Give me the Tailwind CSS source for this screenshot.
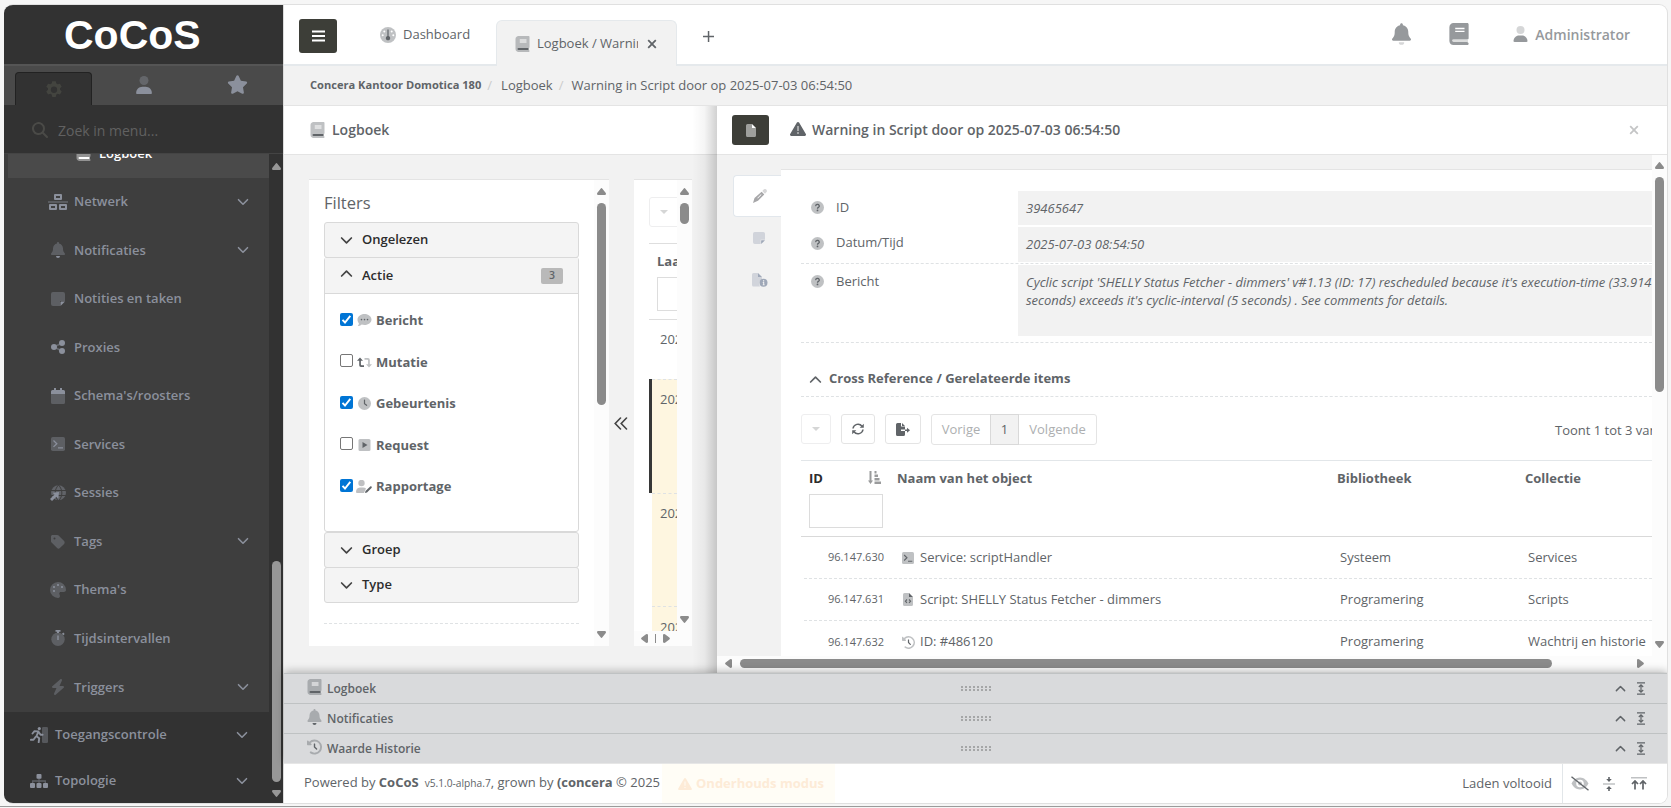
<!DOCTYPE html>
<html lang="nl">
<head>
<meta charset="utf-8">
<title>CoCoS</title>
<script src="https://cdn.jsdelivr.net/npm/@tailwindcss/browser@4"></script>
</head>
<body class="h-[808px] w-[1671px] overflow-hidden bg-[#f6f6f6] font-['Open_Sans','Noto_Sans',sans-serif] text-[13px] text-[#606468]">
<svg class="hidden">
  <symbol id="book" viewBox="0 0 448 512"><path opacity=".4" d="M96 0C43 0 0 43 0 96v320c0 53 43 96 96 96h320c18 0 32-14 32-32s-14-32-32-32v-64c18 0 32-14 32-32V32c0-18-14-32-32-32z"/><path d="M96 384h320v64H96a32 32 0 0 1 0-64z"/><path fill="#fff" d="M136 112h216v32H136zM136 176h216v32H136z"/></symbol>
  <symbol id="book-dark" viewBox="0 0 448 512"><path d="M96 0C43 0 0 43 0 96v320c0 53 43 96 96 96h320c18 0 32-14 32-32s-14-32-32-32v-64c18 0 32-14 32-32V32c0-18-14-32-32-32z"/><path fill="#dcdddd" d="M96 376h336v64H96a32 32 0 0 1 0-64z"/><path fill="#fff" d="M136 112h216v32H136zM136 180h216v32H136z"/></symbol>
  <symbol id="bell" viewBox="0 0 448 512"><path opacity=".4" d="M224 0c-17.700 0-32 14.300-32 32v19.200C119 66 64 130.600 64 208v18.800c0 47-17.300 92.400-48.500 127.600l-7.400 8.300c-8.400 9.400-10.400 22.900-5.300 34.400S19.400 416 32 416h384c12.600 0 24-7.400 29.200-18.900s3.100-25-5.300-34.400l-7.400-8.300C401.300 319.200 384 273.900 384 226.800V208c0-77.400-55-142-128-156.800V32c0-17.700-14.300-32-32-32z"/><path d="M288 448a64 64 0 0 1-128 0z"/></symbol>
  <symbol id="bell-dark" viewBox="0 0 448 512"><path d="M224 0c-17.700 0-32 14.300-32 32v19.200C119 66 64 130.600 64 208v18.800c0 47-17.300 92.400-48.500 127.600l-7.400 8.300c-8.400 9.400-10.400 22.900-5.300 34.400S19.400 416 32 416h384c12.600 0 24-7.400 29.200-18.900s3.100-25-5.300-34.400l-7.400-8.300C401.300 319.200 384 273.900 384 226.800V208c0-77.400-55-142-128-156.800V32c0-17.700-14.300-32-32-32z"/><path opacity=".4" d="M288 448a64 64 0 0 1-128 0z"/></symbol>
  <symbol id="user" viewBox="0 0 448 512"><circle opacity=".4" cx="224" cy="128" r="128"/><path d="M178 304C80 304 0 384 0 482c0 17 13 30 30 30h388c17 0 30-13 30-30 0-98-80-178-178-178z"/></symbol>
  <symbol id="star" viewBox="0 0 576 512"><path d="M316.900 18C311.600 7 300.400 0 288.100 0s-23.400 7-28.800 18L195 150.300 51.400 171.500c-12 1.800-22 10.200-25.700 21.700s-.7 24.200 7.900 32.700L137.800 329l-24.600 145.700c-2 12 3 24.200 12.900 31.300s23 8 33.800 2.300l128.300-68.500 128.300 68.500c10.800 5.700 23.900 4.900 33.800-2.300s14.900-19.300 12.900-31.300L438.500 329l104.200-103.100c8.600-8.500 11.700-21.200 7.900-32.700s-13.700-19.900-25.700-21.700l-143.700-21.200z"/></symbol>
  <symbol id="gear" viewBox="0 0 512 512"><path fill-rule="evenodd" d="M206 14h100l16 66 38 22 65-19 50 86-49 47v40l49 47-50 86-65-19-38 22-16 66H206l-16-66-38-22-65 19-50-86 49-47v-40l-49-47 50-86 65 19 38-22zm50 152a90 90 0 1 0 0 180 90 90 0 0 0 0-180z" transform="translate(0 22)"/></symbol>
  <symbol id="search" viewBox="0 0 512 512"><path d="M416 208c0 45.900-14.900 88.300-40 122.700l126.600 126.700c12.500 12.500 12.500 32.800 0 45.300s-32.800 12.500-45.300 0L330.700 376A208 208 0 1 1 416 208zM208 352a144 144 0 1 0 0-288 144 144 0 0 0 0 288z"/></symbol>
  <symbol id="down" viewBox="0 0 12 12"><path fill="none" stroke="currentColor" stroke-width="1.600" stroke-linecap="round" stroke-linejoin="round" d="M1.500 3.700 6 8.200l4.500-4.500"/></symbol>
  <symbol id="up" viewBox="0 0 12 12"><path fill="none" stroke="currentColor" stroke-width="1.600" stroke-linecap="round" stroke-linejoin="round" d="M1.500 8.300 6 3.800l4.500 4.500"/></symbol>
  <symbol id="network" viewBox="0 0 20 16"><path opacity=".5" d="M0 7.300h20v1.500H0z"/><path fill-rule="evenodd" d="M7 0h6a1 1 0 0 1 1 1v4a1 1 0 0 1-1 1H7a1 1 0 0 1-1-1V1a1 1 0 0 1 1-1zm1 2v2h4V2zM2 10h6a1 1 0 0 1 1 1v4a1 1 0 0 1-1 1H2a1 1 0 0 1-1-1v-4a1 1 0 0 1 1-1zm1 2v2h4v-2zM12 10h6a1 1 0 0 1 1 1v4a1 1 0 0 1-1 1h-6a1 1 0 0 1-1-1v-4a1 1 0 0 1 1-1zm1 2v2h4v-2z"/></symbol>
  <symbol id="note" viewBox="0 0 14 14"><path opacity=".4" d="M2 0h10a2 2 0 0 1 2 2v7H9v5H2a2 2 0 0 1-2-2V2a2 2 0 0 1 2-2z"/><path d="M9.500 14V10a.5.5 0 0 1 .5-.5h4z"/></symbol>
  <symbol id="nodes" viewBox="0 0 14 14"><path opacity=".5" stroke="currentColor" stroke-width="1.800" d="M3 7 11 3M3 7l8 4"/><circle cx="3" cy="7" r="3"/><circle cx="11" cy="3" r="3"/><circle cx="11" cy="11" r="3"/></symbol>
  <symbol id="calendar" viewBox="0 0 14 16"><path opacity=".4" d="M0 6h14v8.500a1.500 1.500 0 0 1-1.500 1.500h-11A1.500 1.500 0 0 1 0 14.500z"/><path d="M3 0h2v2h4V0h2v2h1.500A1.500 1.500 0 0 1 14 3.500V6H0V3.500A1.500 1.500 0 0 1 1.500 2H3z"/></symbol>
  <symbol id="terminal" viewBox="0 0 14 14"><rect opacity=".4" width="14" height="14" rx="1.800"/><path fill="none" stroke="currentColor" stroke-width="1.300" d="m2.500 3.500 3.300 3.200-3.300 3.200M7 10.800h5"/></symbol>
  <symbol id="globe" viewBox="0 0 16 16"><g opacity=".45"><circle cx="8.500" cy="7.800" r="7.500"/></g><path stroke="#3e3e3e" fill="none" d="M1 5.500h15M1 10.500h15M8.500 0c-4.500 5-4.500 11 0 16M8.500 0c4.500 5 4.500 11 0 16"/><path d="M0 14 4.500 9.500 2.500 7.700 9 7l-.7 6.700-2-2L2 16z"/></symbol>
  <symbol id="tag" viewBox="0 0 448 480"><path opacity=".4" fill-rule="evenodd" d="M0 80v149.500c0 17 6.700 33.300 18.700 45.300l176 176c25 25 65.500 25 90.500 0l133.500-133.500c25-25 25-65.500 0-90.500l-176-176c-12-12-28.300-18.700-45.300-18.700H48C21.500 32 0 53.500 0 80zm112 32a32 32 0 1 1 0 64 32 32 0 0 1 0-64z"/></symbol>
  <symbol id="palette" viewBox="0 0 512 512"><path opacity=".4" d="M512 256v2.700c-.4 36.500-33.600 61.300-70.100 61.300H344c-26.500 0-48 21.500-48 48 0 3.400.4 6.700 1 9.900 2.100 10.200 6.500 20 10.800 29.900 6.100 13.800 12.100 27.500 12.100 42 0 31.800-21.600 60.700-53.400 62A256 256 0 1 1 512 256z"/><circle cx="128" cy="288" r="32"/><circle cx="128" cy="160" r="32"/><circle cx="256" cy="96" r="32"/><circle cx="384" cy="160" r="32"/></symbol>
  <symbol id="stopwatch" viewBox="0 0 14 16"><circle opacity=".4" cx="7" cy="9.300" r="6.700"/><path d="M4.500 0h5v1.800H8V3H6V1.800H4.500zM6.300 5.500h1.400V10H6.300zM11 3.800l1.300-1.200 1.400 1.400-1.300 1.300z"/></symbol>
  <symbol id="bolt" viewBox="0 0 448 512"><path opacity=".4" d="M349.400 44.600c5.900-13.700 1.500-29.700-10.600-38.500s-28.600-8-39.900 1.800l-256 224c-10 8.800-13.600 22.900-8.900 35.300S50.700 288 64 288h111.500L98.600 467.400c-5.900 13.700-1.500 29.700 10.600 38.500s28.600 8 39.900-1.800l256-224c10-8.800 13.600-22.900 8.900-35.300s-16.600-20.700-30-20.700H272.500z"/></symbol>
  <symbol id="run" viewBox="0 0 18 16"><rect opacity=".4" x="12" width="6" height="16" rx="1.300"/><circle cx="9.300" cy="1.600" r="1.600"/><path fill="none" stroke="currentColor" stroke-width="1.900" stroke-linecap="round" stroke-linejoin="round" d="m2.500 6.500 2-2.300 4 .2-2 4.800 2.700 2 -.5 4M0.900 12.800h2.600L5.500 10M9 5.500l1.600 2.300h2"/></symbol>
  <symbol id="sitemap" viewBox="0 0 18 14"><path opacity=".5" fill="none" stroke="currentColor" stroke-width="1.300" d="M2.700 10V7h12.600v3M9 4v6"/><rect x="6.500" width="5" height="4.800" rx="1"/><rect y="9" width="5" height="5" rx="1"/><rect x="6.500" y="9" width="5" height="5" rx="1"/><rect x="13" y="9" width="5" height="5" rx="1"/></symbol>
  <symbol id="gauge" viewBox="0 0 16 16"><circle opacity=".4" cx="8" cy="8" r="8"/><g fill="#fff"><circle cx="4.300" cy="4.500" r="1"/><circle cx="11.700" cy="4.500" r="1"/><circle cx="2.700" cy="8.300" r="1"/><circle cx="13.300" cy="8.300" r="1"/></g><path d="M7.400 2.500h1.200V9a2.200 2.200 0 1 1-1.200 0z"/></symbol>
  <symbol id="warn" viewBox="0 32 512 448"><path fill-rule="evenodd" d="M256 32c14.200 0 27.300 7.500 34.500 19.800l216 368c7.300 12.400 7.300 27.700.2 40.100S486.300 480 472 480H40c-14.300 0-27.600-7.700-34.700-20.100s-7-27.800.2-40.100l216-368C228.700 39.500 241.800 32 256 32z"/><path fill="#fff" opacity=".6" d="M232 160h48v160h-48z"/><circle fill="#fff" opacity=".6" cx="256" cy="384" r="30"/></symbol>
  <symbol id="history" viewBox="0 0 512 512"><path opacity=".4" d="M75 75 41 41C25.900 25.900 0 36.600 0 57.900V168c0 13.300 10.700 24 24 24h110.100c21.400 0 32.100-25.900 17-41l-30.800-30.800A192 192 0 1 1 146.300 413.600c-14.500-10.100-34.400-6.600-44.600 7.900s-6.600 34.400 7.900 44.600A256 256 0 1 0 75 75z"/><path d="M256 128c-13.300 0-24 10.700-24 24v104c0 6.400 2.500 12.500 7 17l72 72c9.400 9.400 24.600 9.400 33.900 0s9.400-24.600 0-33.900l-65-65V152c0-13.300-10.700-24-24-24z"/></symbol>
  <symbol id="file" viewBox="0 0 10 13"><path opacity=".5" d="M1.500 0H6v4h4v7.500A1.500 1.500 0 0 1 8.500 13h-7A1.500 1.500 0 0 1 0 11.500v-10A1.500 1.500 0 0 1 1.500 0z"/><path d="M6 0l4 4H6z"/></symbol>
  <symbol id="pencil" viewBox="0 0 14 14"><path opacity=".45" d="M9.300 2 10.700.6a1.800 1.800 0 0 1 2.600 2.600L12 4.700z"/><path fill-rule="evenodd" d="M8.600 2.700 11.300 5.400 5 11.800 0 14l1.500-5zM8 5.300 4.300 9l.5.500 3.700-3.700z"/></symbol>
  <symbol id="fileinfo" viewBox="0 0 16 14"><path opacity=".4" d="M1.500 0H6v4h4v2a5 5 0 0 0-2 7.500H1.500A1.500 1.500 0 0 1 0 12V1.500A1.500 1.500 0 0 1 1.500 0z"/><path d="M6 0l4 4H6z"/><circle cx="11.500" cy="9.800" r="4"/><path fill="#f2f2f2" d="M11 7.300h1.200v1.100H11zM10.700 9h1.500v2.600h.5v.7h-2v-.7h.5V9.700h-.5z"/></symbol>
  <symbol id="help" viewBox="0 0 13 13"><circle opacity=".4" cx="6.500" cy="6.500" r="6.500"/><path fill="none" stroke="currentColor" stroke-width="1.300" d="M4.700 5.100a1.800 1.600 0 1 1 2.700 1.300q-.9.500-.9 1.300"/><circle cx="6.500" cy="9.400" r=".9"/></symbol>
  <symbol id="comment" viewBox="0 0 14 13"><path opacity=".4" d="M7 0c3.900 0 7 2.500 7 5.500S10.900 11 7 11c-1 0-2-.2-2.800-.5C3 11.500 1.500 12 .3 12c.7-.9 1.100-1.700 1.100-2.800C.5 8.200 0 7 0 5.500 0 2.500 3.100 0 7 0z"/><circle cx="4" cy="5.600" r=".8"/><circle cx="7" cy="5.600" r=".8"/><circle cx="10" cy="5.600" r=".8"/></symbol>
  <symbol id="retweet" viewBox="0 0 15 11"><path d="M0 3.800 3 .5l3 3.300H3.900v3.700a.7.700 0 0 0 .7.700H7V10H4a1.800 1.800 0 0 1-1.800-1.800V3.800z"/><path opacity=".4" d="M15 7.200 12 10.500 9 7.200h2.100V3.500a.7.700 0 0 0-.7-.7H7.500V1H11a1.800 1.800 0 0 1 1.800 1.800v4.400z"/></symbol>
  <symbol id="clock" viewBox="0 0 13 13"><circle opacity=".4" cx="6.500" cy="6.500" r="6.500"/><path fill="none" stroke="currentColor" stroke-width="1.200" stroke-linecap="round" d="M6.500 3v3.700L8.600 8.300"/></symbol>
  <symbol id="play" viewBox="0 0 12 12"><rect opacity=".4" width="12" height="12" rx="1.500"/><path d="M4 3l5 3-5 3z"/></symbol>
  <symbol id="useredit" viewBox="0 0 16 13"><g opacity=".4"><circle cx="5.500" cy="3" r="3.200"/><path d="M4 7.500h3q2 0 3 1L8 13H1a1 1 0 0 1-1-1 4.500 4.500 0 0 1 4-4.500z"/></g><path d="M9 13l.5-2 4.700-4.600q.6-.5 1.300.1t0 1.400L11 12.500z"/></symbol>
  <symbol id="filecode" viewBox="0 0 10 13"><path opacity=".4" d="M1.500 0H6v4h4v7.500A1.500 1.500 0 0 1 8.500 13h-7A1.500 1.500 0 0 1 0 11.500v-10A1.500 1.500 0 0 1 1.500 0z"/><path d="M6 0l4 4H6z"/><path fill="none" stroke="currentColor" stroke-width="1.100" d="M4 6.500 2.400 8.200 4 9.900M6 6.500l1.600 1.700L6 9.900"/></symbol>
  <symbol id="expand" viewBox="0 0 8 13"><path fill="none" stroke="currentColor" stroke-width="1.200" d="M0 .9h8M0 12.100h8M4 3v7M1.800 5 4 2.800 6.200 5M1.800 8 4 10.200 6.200 8"/></symbol>
  <symbol id="dots" viewBox="0 0 31 5"><path fill="#a5a6a7" d="M0 0h2v2H0zM4 0h2v2H4zM8 0h2v2H8zM12 0h2v2h-2zM16 0h2v2h-2zM20 0h2v2h-2zM24 0h2v2h-2zM28 0h2v2h-2zM0 3h2v2H0zM4 3h2v2H4zM8 3h2v2H8zM12 3h2v2h-2zM16 3h2v2h-2zM20 3h2v2h-2zM24 3h2v2h-2zM28 3h2v2h-2z"/></symbol>
  <symbol id="tri-up" viewBox="0 0 9 7"><path d="M3.600.7q.9-1.200 1.800 0L8.800 5q.6 2-1 2H1.200q-1.600 0-1-2z"/></symbol>
  <symbol id="x" viewBox="0 0 10 10"><path fill="none" stroke="currentColor" stroke-width="1.800" d="m1.200 1.200 7.600 7.600m0-7.600-7.600 7.600"/></symbol>
</svg>

<div class="h-[807px] overflow-hidden border-b border-[#9b9b9b] pl-1 pt-[4px]">
<div class="flex h-[800px] w-[1664px] overflow-hidden rounded-[9px] border-y border-r border-[#e0e0e0] bg-white">

  <!-- Sidebar -->
  <aside class="flex w-[280px] shrink-0 flex-col border-r border-[#dcdcdc] bg-[#323232] fill-current text-[#8b909c]">
    <div class="h-[59px] shrink-0 pl-[60px] pt-[6px] font-['Liberation_Sans',Arial,sans-serif] text-[41px] font-bold leading-[48px] text-white">CoCoS</div>
    <div class="flex h-[41px] shrink-0 border-t-2 border-[#555] bg-[#4a4a4a]">
      <div class="ml-[11px] mt-[6px] flex h-[33px] w-[77px] items-center justify-center rounded-t-[4px] border border-b-0 border-[#222] bg-[#323232] text-[#43443f]"><svg class="size-[18px] fill-current"><use href="#gear"/></svg></div>
      <svg class="ml-[44px] mt-[10px] h-[18px] w-[16px] fill-current text-[#8b909c]"><use href="#user"/></svg>
      <svg class="ml-[75px] mt-[9px] h-[19px] w-[21px] fill-current"><use href="#star"/></svg>
    </div>
    <div class="flex h-[49px] shrink-0 items-center border-b border-[#444] pl-[28px] pt-[2px] text-[14px] text-[#616161]">
      <svg class="mr-[10px] size-4 fill-current text-[#4a4a47]"><use href="#search"/></svg>Zoek in menu...
    </div>
    <div class="flex min-h-0 flex-1">
      <nav class="w-[265px] overflow-hidden text-[13px] font-semibold">
        <div class="-mt-[25px] bg-[#3e3e3e]">
          <div class="ml-1 flex h-[48.500px] items-center bg-[#4a4a4a] pl-[68px] text-white"><svg class="mr-[8px] h-4 w-[15px] fill-current"><use href="#book"/></svg>Logboek</div>
          <div class="flex h-[48.500px] items-center pl-[44px]"><svg class="mr-[6px] h-4 w-5 shrink-0"><use href="#network"/></svg><span class="w-[163px]">Netwerk</span><svg class="size-3"><use href="#down"/></svg></div>
          <div class="flex h-[48.500px] items-center pl-[44px]"><svg class="mr-[6px] h-4 w-5 shrink-0"><use href="#bell"/></svg><span class="w-[163px]">Notificaties</span><svg class="size-3"><use href="#down"/></svg></div>
          <div class="flex h-[48.500px] items-center pl-[44px]"><svg class="mr-[6px] h-[14px] w-5 shrink-0"><use href="#note"/></svg>Notities en taken</div>
          <div class="flex h-[48.500px] items-center pl-[44px]"><svg class="mr-[6px] h-[14px] w-5 shrink-0"><use href="#nodes"/></svg>Proxies</div>
          <div class="flex h-[48.500px] items-center pl-[44px]"><svg class="mr-[6px] h-4 w-5 shrink-0"><use href="#calendar"/></svg>Schema's/roosters</div>
          <div class="flex h-[48.500px] items-center pl-[44px]"><svg class="mr-[6px] h-[14px] w-5 shrink-0"><use href="#terminal"/></svg>Services</div>
          <div class="flex h-[48.500px] items-center pl-[44px]"><svg class="mr-[6px] h-4 w-5 shrink-0"><use href="#globe"/></svg>Sessies</div>
          <div class="flex h-[48.500px] items-center pl-[44px]"><svg class="mr-[6px] h-[15px] w-5 shrink-0"><use href="#tag"/></svg><span class="w-[163px]">Tags</span><svg class="size-3"><use href="#down"/></svg></div>
          <div class="flex h-[48.500px] items-center pl-[44px]"><svg class="mr-[6px] h-4 w-5 shrink-0"><use href="#palette"/></svg>Thema's</div>
          <div class="flex h-[48.500px] items-center pl-[44px]"><svg class="mr-[6px] h-4 w-5 shrink-0"><use href="#stopwatch"/></svg>Tijdsintervallen</div>
          <div class="flex h-[49.500px] items-center pl-[44px]"><svg class="mr-[6px] h-4 w-5 shrink-0"><use href="#bolt"/></svg><span class="w-[163px]">Triggers</span><svg class="size-3"><use href="#down"/></svg></div>
        </div>
        <div class="flex h-[46px] items-center pl-[26px]"><svg class="mr-[7px] h-4 w-[18px] shrink-0"><use href="#run"/></svg><span class="w-[181px]">Toegangscontrole</span><svg class="size-3"><use href="#down"/></svg></div>
        <div class="flex h-[46px] items-center pl-[26px]"><svg class="mr-[7px] h-[14px] w-[18px] shrink-0"><use href="#sitemap"/></svg><span class="w-[181px]">Topologie</span><svg class="size-3"><use href="#down"/></svg></div>
      </nav>
      <div class="flex w-[14px] flex-col items-center pt-[9px] text-[#979797]">
        <svg class="h-[7px] w-[9px] shrink-0"><use href="#tri-up"/></svg>
        <div class="mt-[391px] h-[221px] w-[9px] shrink-0 rounded-full bg-[#979797]"></div>
        <svg class="mt-2 h-[7px] w-[9px] shrink-0 rotate-180"><use href="#tri-up"/></svg>
      </div>
    </div>
  </aside>

  <main class="flex min-w-0 flex-1 flex-col fill-current">
    <!-- Top bar -->
    <header class="flex h-[61px] shrink-0 items-start border-b-2 border-[#e5e9ec] pl-[15px] text-[13px]">
      <div class="mt-[14px] flex h-[34px] w-[38px] items-center justify-center rounded-[3px] bg-[#3d3e38] text-white"><svg class="h-[12px] w-[13px]" viewBox="0 0 13 12"><path d="M0 .5h13v2H0zM0 5h13v2H0zM0 9.500h13v2H0z"/></svg></div>
      <div class="ml-[43px] mt-[13px] flex h-[34px] w-[116px] items-center gap-[7px]"><svg class="size-4"><use href="#gauge"/></svg>Dashboard</div>
      <div class="mt-[15px] flex h-[46px] w-[181px] items-center rounded-t-[6px] border border-b-0 border-[#e5e9ec] bg-[#f2f2f2] pl-[18px] pt-px"><svg class="mr-[7px] h-4 w-[15px] shrink-0"><use href="#book"/></svg><span class="w-[101px] overflow-hidden whitespace-nowrap">Logboek / Warning</span><svg class="ml-[9px] size-[10px]"><use href="#x"/></svg></div>
      <svg class="ml-[26px] mt-[26px] size-[11px]" viewBox="0 0 11 11"><path d="M4.800 0h1.500v4.800H11v1.500H6.300V11H4.800V6.300H0V4.800h4.800z"/></svg>
      <div class="ml-auto mr-[37px] mt-[10px] flex h-[38px] items-center font-semibold text-[#96999c]">
        <svg class="h-[22px] w-[19px]"><use href="#bell-dark"/></svg>
        <svg class="ml-[38px] h-[22px] w-[20px]"><use href="#book-dark"/></svg>
        <svg class="ml-[44px] mr-[7px] h-4 w-[15px]"><use href="#user"/></svg><span class="text-[14px]">Administrator</span>
      </div>
    </header>
    <div class="flex h-[40px] shrink-0 items-center border-b border-[#e4e4e4] bg-[#f2f2f2] pl-[26px] text-[13px]">
      <b class="text-[11.100px]">Concera Kantoor Domotica 180</b><span class="mx-[6px] text-[#ccc]">/</span><span class="ml-[3px]">Logboek</span><span class="ml-[6px] mr-[8px] text-[#ccc]">/</span><span>Warning in Script door op 2025-07-03 06:54:50</span>
    </div>

    <!-- Split workspace -->
    <div class="flex h-[567px] shrink-0 bg-[#f2f2f2]">
      <section class="flex w-[433px] shrink-0 flex-col">
        <div class="flex h-[49px] items-center border-b border-[#e4e4e4] bg-white pb-px pl-[26px] text-[14px] font-semibold"><svg class="mr-[7px] h-4 w-[15px]"><use href="#book"/></svg>Logboek</div>
        <div class="flex h-[518px] pl-[25px] pt-[24px]">
          <div class="flex h-[467px] w-[300px] border-t border-[#e4e4e4] bg-white">
            <div class="w-[285px] overflow-hidden pl-[15px] pt-[10px]">
              <h2 class="h-[32px] text-[16.500px] font-medium leading-[25px]">Filters</h2>
              <div class="w-[255px] text-[13px] font-semibold text-[#2c2c2c]">
                <div class="flex h-[36px] items-center rounded-[3px] border border-[#d9d9d9] bg-[#f4f4f4] pl-[15px]"><svg class="mr-[9px] size-[13px] text-[#444]"><use href="#down"/></svg>Ongelezen</div>
                <div class="-mt-px h-[275px] rounded-[3px] border border-[#d9d9d9]">
                  <div class="flex h-[36px] items-center border-b border-[#d9d9d9] bg-[#f4f4f4] pl-[15px] pr-[15px]"><svg class="mb-[4px] mr-[9px] size-[13px] text-[#444]"><use href="#up"/></svg>Actie<span class="ml-auto mt-px flex h-4 w-[22px] items-center justify-center rounded-[2px] bg-[#b9b9b9] text-[10.500px] text-[#606468]">3</span></div>
                  <div class="pl-[15px] pt-[6px] font-bold text-[#606468]">
                    <label class="flex h-[41.500px] items-center"><span class="mb-[3px] mr-[4px] flex size-[13px] items-center justify-center rounded-[2px] bg-[#0075d5]"><svg class="size-[11px]" viewBox="0 0 11 11"><path fill="none" stroke="#fff" stroke-width="1.900" d="m1.500 5.800 2.500 2.700 5.300-6.700"/></svg></span><svg class="mr-[4px] h-[13px] w-[15px]"><use href="#comment"/></svg>Bericht</label>
                    <label class="flex h-[41.500px] items-center"><span class="mb-[3px] mr-[4px] size-[13px] rounded-[2px] border border-[#767676] bg-white"></span><svg class="mr-[4px] h-[11px] w-[15px]"><use href="#retweet"/></svg>Mutatie</label>
                    <label class="flex h-[41.500px] items-center"><span class="mb-[3px] mr-[4px] flex size-[13px] items-center justify-center rounded-[2px] bg-[#0075d5]"><svg class="size-[11px]" viewBox="0 0 11 11"><path fill="none" stroke="#fff" stroke-width="1.900" d="m1.500 5.800 2.500 2.700 5.300-6.700"/></svg></span><svg class="mr-[4px] h-[13px] w-[15px]"><use href="#clock"/></svg>Gebeurtenis</label>
                    <label class="flex h-[41.500px] items-center"><span class="mb-[3px] mr-[4px] size-[13px] rounded-[2px] border border-[#767676] bg-white"></span><svg class="mr-[4px] h-[12px] w-[15px]"><use href="#play"/></svg>Request</label>
                    <label class="flex h-[41.500px] items-center"><span class="mb-[3px] mr-[4px] flex size-[13px] items-center justify-center rounded-[2px] bg-[#0075d5]"><svg class="size-[11px]" viewBox="0 0 11 11"><path fill="none" stroke="#fff" stroke-width="1.900" d="m1.500 5.800 2.500 2.700 5.300-6.700"/></svg></span><svg class="-ml-px mr-[4px] h-[13px] w-[16px]"><use href="#useredit"/></svg>Rapportage</label>
                  </div>
                </div>
                <div class="flex h-[36px] items-center rounded-[3px] border border-[#d9d9d9] bg-[#f4f4f4] pl-[15px]"><svg class="mr-[9px] size-[13px] text-[#444]"><use href="#down"/></svg>Groep</div>
                <div class="-mt-px flex h-[36px] items-center rounded-[3px] border border-[#d9d9d9] bg-[#f4f4f4] pl-[15px]"><svg class="mr-[9px] size-[13px] text-[#444]"><use href="#down"/></svg>Type</div>
                <div class="mt-[20px] border-t border-dashed border-[#dfe2e4]"></div>
                <div class="mt-[17px] pl-[1px] text-[16.500px] font-medium leading-[22px] text-[#606468]">Zoeken</div>
              </div>
            </div>
            <div class="flex w-[15px] flex-col items-center bg-[#fcfcfc] pt-[8px] text-[#8b8b8b]">
              <svg class="h-[7px] w-[9px]"><use href="#tri-up"/></svg>
              <div class="mt-[8px] h-[202px] w-[9px] rounded-full bg-[#8b8b8b]"></div>
              <svg class="mb-[8px] mt-auto h-[7px] w-[9px] rotate-180"><use href="#tri-up"/></svg>
            </div>
          </div>
          <svg class="ml-[5px] mr-[6px] mt-[238px] h-[13px] w-[14px] text-[#444]" viewBox="0 0 14 13"><path fill="none" stroke="currentColor" stroke-width="1.600" stroke-linecap="round" d="M6.500 1 1.200 6.500l5.300 5.500M12.500 1 7.200 6.500l5.300 5.500"/></svg>
          <div class="h-[467px] w-[58px] border-t border-[#e4e4e4] bg-white">
            <div class="flex h-[451px]">
              <div class="w-[43px] overflow-hidden whitespace-nowrap pl-[15px] pt-[17px]">
                <div class="flex h-[30px] w-[40px] items-center rounded-[3px] border border-[#eeeeef] pl-[10px]"><svg class="h-[4px] w-[8px] text-[#d5d6d6]" viewBox="0 0 8 4"><path d="M0 0h8L4 4z"/></svg></div>
                <div class="mt-[16px] h-[77px] border-y border-[#dedede] pl-[8px] pt-[8px] font-bold">Laatste<div class="mt-[5px] h-[34px] w-[80px] border border-[#ddd]"></div></div>
                <div class="h-[59px] pl-[11px] pt-[10px]">2025-07-03</div>
                <div class="h-[114px] border-l-[3px] border-[#373737] bg-[#fef6e0] pl-[8px]"><div class="-ml-2 border-t border-dashed border-[#dfe2e4] pl-[8px] pt-[10px]">2025-07-03</div></div>
                <div class="ml-[3px] h-[113px] border-t border-dashed border-[#dfe2e4] bg-[#fef6e0] pl-[8px] pt-[10px]">2025-07-03</div>
                <div class="ml-[3px] h-[113px] border-t border-dashed border-[#dfe2e4] bg-[#fef6e0] pl-[8px] pt-[11px]">2025-07-03</div>
              </div>
              <div class="flex w-[15px] flex-col items-center bg-[#fcfcfc] pt-[8px] text-[#8b8b8b]">
                <svg class="h-[7px] w-[9px]"><use href="#tri-up"/></svg>
                <div class="mt-[8px] h-[21px] w-[9px] rounded-full bg-[#8b8b8b]"></div>
                <svg class="mb-[8px] mt-auto h-[7px] w-[9px] rotate-180"><use href="#tri-up"/></svg>
              </div>
            </div>
            <div class="flex h-[15px] items-center bg-[#fcfcfc] pl-[6px] text-[#8b8b8b]">
              <svg class="h-[7px] w-[9px] -rotate-90"><use href="#tri-up"/></svg>
              <div class="ml-[6px] h-[9px] w-px bg-[#8b8b8b]"></div>
              <svg class="ml-[6px] h-[7px] w-[9px] rotate-90"><use href="#tri-up"/></svg>
            </div>
          </div>
        </div>
      </section>

      <!-- Detail panel -->
      <section class="relative flex h-[566px] min-w-0 flex-1 flex-col bg-[#f2f2f2]">
        <div class="absolute -left-[25px] top-0 h-[567px] w-[25px] bg-linear-to-r from-black/0 via-black/4 to-black/18"></div>
        <div class="flex h-[49px] shrink-0 items-center border-b border-[#e4e4e4] bg-white pl-[15px] text-[14px] font-semibold">
          <div class="flex h-[30px] w-[37px] items-center justify-center rounded-[3px] bg-[#3d3e38] text-white"><svg class="h-[13px] w-[10px]"><use href="#file"/></svg></div>
          <svg class="mb-[2px] ml-[21px] mr-[6px] h-[14px] w-[16px]"><use href="#warn"/></svg><span class="pb-[2px]">Warning in Script door op 2025-07-03 06:54:50</span>
          <svg class="ml-auto mr-[28px] size-[10px] text-[#c4c5c6]"><use href="#x"/></svg>
        </div>
        <div class="flex h-[501px]">
          <div class="flex w-[64px] shrink-0 flex-col items-end pt-[20px] text-[#9fa8b8]">
            <div class="flex h-[42px] w-[48px] items-center rounded-l-[4px] border border-r-0 border-[#e2e7ec] bg-white pl-[19px] text-[#a7a7a9]"><svg class="size-[14px]"><use href="#pencil"/></svg></div>
            <svg class="mr-[16px] mt-[15px] size-[12px]"><use href="#note"/></svg>
            <svg class="mr-[13px] mt-[29px] h-[14px] w-[16px]"><use href="#fileinfo"/></svg>
          </div>
          <div class="mt-[14px] min-w-0 flex-1 overflow-hidden whitespace-nowrap border-t border-[#e4e4e4] bg-white pl-[20px]">
            <div class="mt-[21px] flex h-[36px]">
              <div class="flex h-[33px] w-[217px] items-center pl-[10px]"><svg class="mr-[12px] size-[13px]"><use href="#help"/></svg>ID</div>
              <div class="h-[34px] flex-1 bg-[#f2f2f2] pl-[8px] italic leading-[34px]">39465647</div>
            </div>
            <div class="flex h-[37px] border-b border-dashed border-[#dfe2e4]">
              <div class="flex h-[32px] w-[217px] items-center pl-[10px]"><svg class="mr-[12px] size-[13px]"><use href="#help"/></svg>Datum/Tijd</div>
              <div class="h-[35px] flex-1 bg-[#f2f2f2] pl-[8px] italic leading-[34px]">2025-07-03 08:54:50</div>
            </div>
            <div class="flex h-[79px] border-b border-dashed border-[#dfe2e4] pt-px">
              <div class="flex h-[33px] w-[217px] items-center pl-[10px]"><svg class="mr-[12px] size-[13px]"><use href="#help"/></svg>Bericht</div>
              <div class="h-[71px] flex-1 bg-[#f2f2f2] pl-[8px] pt-[8px] italic leading-[18px]">Cyclic script 'SHELLY Status Fetcher - dimmers' v#1.13 (ID: 17) rescheduled because it's execution-time (33.914<br>seconds) exceeds it's cyclic-interval (5 seconds) . See comments for details.</div>
            </div>
            <div class="flex h-[54px] items-center border-b border-dashed border-[#dfe2e4] pl-[8px] pt-[19px] font-bold"><svg class="mr-[7px] size-[13px]"><use href="#up"/></svg>Cross Reference / Gerelateerde items</div>
            <div class="flex h-[63px] items-start pt-[17px]">
              <div class="flex h-[30px] w-[30px] shrink-0 items-center justify-center rounded-[3px] border border-[#eeeeef]"><svg class="h-[4px] w-[8px] text-[#d5d6d6]" viewBox="0 0 8 4"><path d="M0 0h8L4 4z"/></svg></div>
              <div class="ml-[10px] flex h-[30px] w-[34px] shrink-0 items-center justify-center rounded-[3px] border border-[#e4e4e4]"><svg class="size-[12px]" viewBox="0 0 12 12"><path fill="none" stroke="currentColor" stroke-width="1.500" d="M1 5.500A5 5 0 0 1 10 3.300M11 6.500A5 5 0 0 1 2 8.700"/><path d="M11.800.7v4.100H7.700zM.2 11.300V7.200h4.100z"/></svg></div>
              <div class="ml-[10px] flex h-[30px] w-[36px] shrink-0 items-center justify-center rounded-[3px] border border-[#e4e4e4]"><svg class="h-[13px] w-[14px]" viewBox="0 0 14 13"><path d="M1.500 0H5v3.500h4v3H5v1.500h4v3.500A1.500 1.500 0 0 1 7.500 13h-6A1.500 1.500 0 0 1 0 11.500v-10A1.500 1.500 0 0 1 1.500 0zM6 0l3 3H6zM9 6.500h2V4.700l3 2.600-3 2.500V8H9z"/></svg></div>
              <div class="ml-[10px] flex h-[31px] w-[166px] shrink-0 items-center rounded-[3px] border border-[#e4e4e4] text-[#adafb1]"><span class="w-[58px] text-center">Vorige</span><span class="-my-px flex h-[31px] w-[29px] items-center justify-center border border-[#d9d9d9] bg-[#f2f2f2] text-[#606468]">1</span><span class="w-[77px] text-center">Volgende</span></div>
              <span class="ml-[458px] mt-[7px] shrink-0">Toont 1 tot 3 van 3</span>
            </div>
            <div class="flex h-[77px] border-y border-b-[#d9d9d9] border-t-[#e2e6e9] pl-[8px] pt-[8px] font-bold">
              <div class="w-[88px] text-[#2c2c2c]"><div class="flex h-[20px] w-[72px] items-center justify-between">ID<svg class="mb-1 h-[13px] w-[13px] text-[#9a9b9c]" viewBox="0 0 13 13"><path d="M1.500 0h2v9.500H5L2.500 13 0 9.500h1.500zM6.500 0h2v2.500h-2zM6.500 3.500H10V6H6.500zM6.500 7h5v2.500h-5zM6.500 10.500H13V13H6.500z"/></svg></div><div class="mt-[5px] h-[34px] w-[74px] border border-[#dcdcdc]"></div></div>
              <span class="w-[440px]">Naam van het object</span><span class="w-[188px]">Bibliotheek</span><span>Collectie</span>
            </div>
            <div class="ml-[3px] flex h-[42px] items-center border-b border-dashed border-[#dfe2e4]"><span class="w-[80px] text-right text-[11px]">96.147.630</span><svg class="ml-[18px] mr-[6px] size-[12px]"><use href="#terminal"/></svg><span class="w-[420px]">Service: scriptHandler</span><span class="w-[188px]">Systeem</span><span>Services</span></div>
            <div class="ml-[3px] flex h-[42px] items-center border-b border-dashed border-[#dfe2e4]"><span class="w-[80px] text-right text-[11px]">96.147.631</span><svg class="ml-[18px] mr-[6px] h-[13px] w-[12px]"><use href="#filecode"/></svg><span class="w-[420px]">Script: SHELLY Status Fetcher - dimmers</span><span class="w-[188px]">Programering</span><span>Scripts</span></div>
            <div class="ml-[3px] flex h-[42px] items-center"><span class="w-[80px] text-right text-[11px]">96.147.632</span><svg class="ml-[18px] mr-[5px] size-[13px]"><use href="#history"/></svg><span class="w-[420px]">ID: #486120</span><span class="w-[188px]">Programering</span><span>Wachtrij en historie</span></div>
          </div>
          <div class="flex w-[15px] shrink-0 flex-col items-center bg-[#fcfcfc] pt-[7px] text-[#8b8b8b]">
            <svg class="h-[7px] w-[9px]"><use href="#tri-up"/></svg>
            <div class="mt-[8px] h-[215px] w-[9px] rounded-full bg-[#8b8b8b]"></div>
            <svg class="mb-[8px] mt-auto h-[7px] w-[9px] rotate-180"><use href="#tri-up"/></svg>
          </div>
        </div>
        <div class="flex h-[16px] items-center bg-[#fcfcfc] pb-px pl-[7px] text-[#8b8b8b]">
          <svg class="h-[7px] w-[9px] -rotate-90"><use href="#tri-up"/></svg>
          <div class="ml-[7px] h-[9px] w-[812px] rounded-full bg-[#8b8b8b]"></div>
          <svg class="ml-[84px] h-[7px] w-[9px] rotate-90"><use href="#tri-up"/></svg>
        </div>
      </section>
    </div>

    <!-- Docked panels -->
    <div class="relative shrink-0 bg-[#d9dadc] text-[12px] font-semibold shadow-[0_-2px_8px_rgba(0,0,0,0.25)]">
      <div class="flex h-[30px] items-center border-t border-[#bfc2c3] pl-[23px]"><svg class="mb-[4px] mr-[5px] h-4 w-[15px]"><use href="#book"/></svg><span class="w-[634px]">Logboek</span><svg class="h-[5px] w-[31px]"><use href="#dots"/></svg><svg class="ml-auto size-[11px]"><use href="#up"/></svg><svg class="ml-[11px] mr-[22px] h-[13px] w-[8px]"><use href="#expand"/></svg></div>
      <div class="flex h-[30px] items-center border-t border-[#bfc2c3] pl-[23px]"><svg class="mb-[4px] mr-[5px] h-4 w-[15px]"><use href="#bell"/></svg><span class="w-[634px]">Notificaties</span><svg class="h-[5px] w-[31px]"><use href="#dots"/></svg><svg class="ml-auto size-[11px]"><use href="#up"/></svg><svg class="ml-[11px] mr-[22px] h-[13px] w-[8px]"><use href="#expand"/></svg></div>
      <div class="flex h-[30px] items-center border-t border-[#bfc2c3] pl-[23px]"><svg class="mb-[4px] mr-[5px] h-4 w-[15px]"><use href="#history"/></svg><span class="w-[634px]">Waarde Historie</span><svg class="h-[5px] w-[31px]"><use href="#dots"/></svg><svg class="ml-auto size-[11px]"><use href="#up"/></svg><svg class="ml-[11px] mr-[22px] h-[13px] w-[8px]"><use href="#expand"/></svg></div>
    </div>
    <footer class="relative flex h-[40px] shrink-0 items-center border-t border-[#e6e6e6] bg-white pl-[20px] text-[13px]">
      <p class="w-[358px] whitespace-nowrap pb-px">Powered by <b>CoCoS</b><span class="ml-[6px] text-[10.200px]">v5.1.0-alpha.7</span>, grown by <b>(concera</b> © 2025</p>
      <div class="flex h-full w-[173px] items-center bg-[#fffdf6] pl-[16px] font-bold text-[#fdebd7]"><svg class="mr-[4px] h-[12px] w-[14px]"><use href="#warn"/></svg>Onderhouds modus</div>
      <div class="ml-auto flex h-full items-center pr-[20px]"><span>Laden voltooid</span>
        <div class="ml-[10px] flex h-full items-center border-l border-[#e2e6e9] pl-[8px]"><svg class="h-[15px] w-[18px]" viewBox="0 0 18 15"><path opacity=".4" fill-rule="evenodd" d="M9 1.500c4 0 7 3 8.500 6-1.500 3-4.500 6-8.500 6s-7-3-8.500-6C2 4.500 5 1.500 9 1.500zm0 2.200a3.800 3.800 0 1 0 0 7.600 3.800 3.800 0 0 0 0-7.600zM9 5.500a2 2 0 1 1 0 4 2 2 0 0 1 0-4z"/><path stroke="currentColor" stroke-width="1.400" d="m.5.700 17 13.600"/></svg><svg class="ml-[14px] h-[14px] w-[12px]" viewBox="0 0 12 14"><path opacity=".4" d="M0 6.300h12v1.500H0z"/><path d="M5.200 0h1.600v2h2L6 5 3.200 2h2zM5.200 14h1.600v-2h2L6 9l-2.800 3h2z"/></svg><svg class="ml-[16px] h-[13px] w-[16px]" viewBox="0 0 16 13"><path opacity=".4" d="M0 0h16v1.500H0z"/><path fill="none" stroke="currentColor" stroke-width="1.700" d="M4 12.500V4M1 7l3-3 3 3M12 12.500V4M9 7l3-3 3 3"/></svg></div></div>
    </footer>
  </main>
</div>
</div>
</body>
</html>
